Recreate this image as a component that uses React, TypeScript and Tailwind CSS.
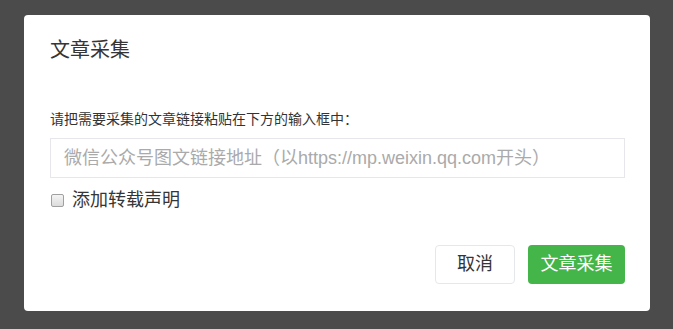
export default function App() {
  return (
    <div
      className="flex h-[329px] w-[673px] items-start bg-[#4b4b4b] pl-[24px] pt-[15px]"
      style={{ fontFamily: '"Liberation Sans", "Noto Sans CJK SC", sans-serif' }}
    >
      <div className="flex h-[296px] w-[626px] flex-col rounded-[4px] bg-white pl-[26px] pr-[25px]">
        <h2 className="mt-[22px] h-[26px] text-[20px] leading-[26px] text-[#353535]">文章采集</h2>

        <p className="mt-[46px] text-[14px] leading-[20px] text-[#333]">
          请把需要采集的文章链接粘贴在下方的输入框中：
        </p>

        <input
          className="mt-[9px] h-[40px] w-full border border-[#e7e7eb] px-[13px] text-[18px] text-[#333] outline-none placeholder:text-[#aaaaaa]"
          placeholder="微信公众号图文链接地址（以https://mp.weixin.qq.com开头）"
        />

        <label className="mt-[10px] flex items-center gap-[8px] text-[18px] leading-[24px] text-[#353535]">
          <span className="ml-[1px] h-[13px] w-[13px] rounded-[2px] border border-[#a0a0a0] bg-gradient-to-b from-[#f4f4f4] to-[#dcdcdc]" />
          添加转载声明
        </label>

        <div className="mt-auto mb-[27px] flex justify-end gap-[13px]">
          <button className="h-[39px] w-[80px] rounded-[4px] border border-[#e4e8eb] bg-white text-[18px] text-[#353535]">
            取消
          </button>
          <button className="h-[39px] w-[97px] rounded-[4px] bg-[#44b549] text-[18px] text-white">
            文章采集
          </button>
        </div>
      </div>
    </div>
  );
}
